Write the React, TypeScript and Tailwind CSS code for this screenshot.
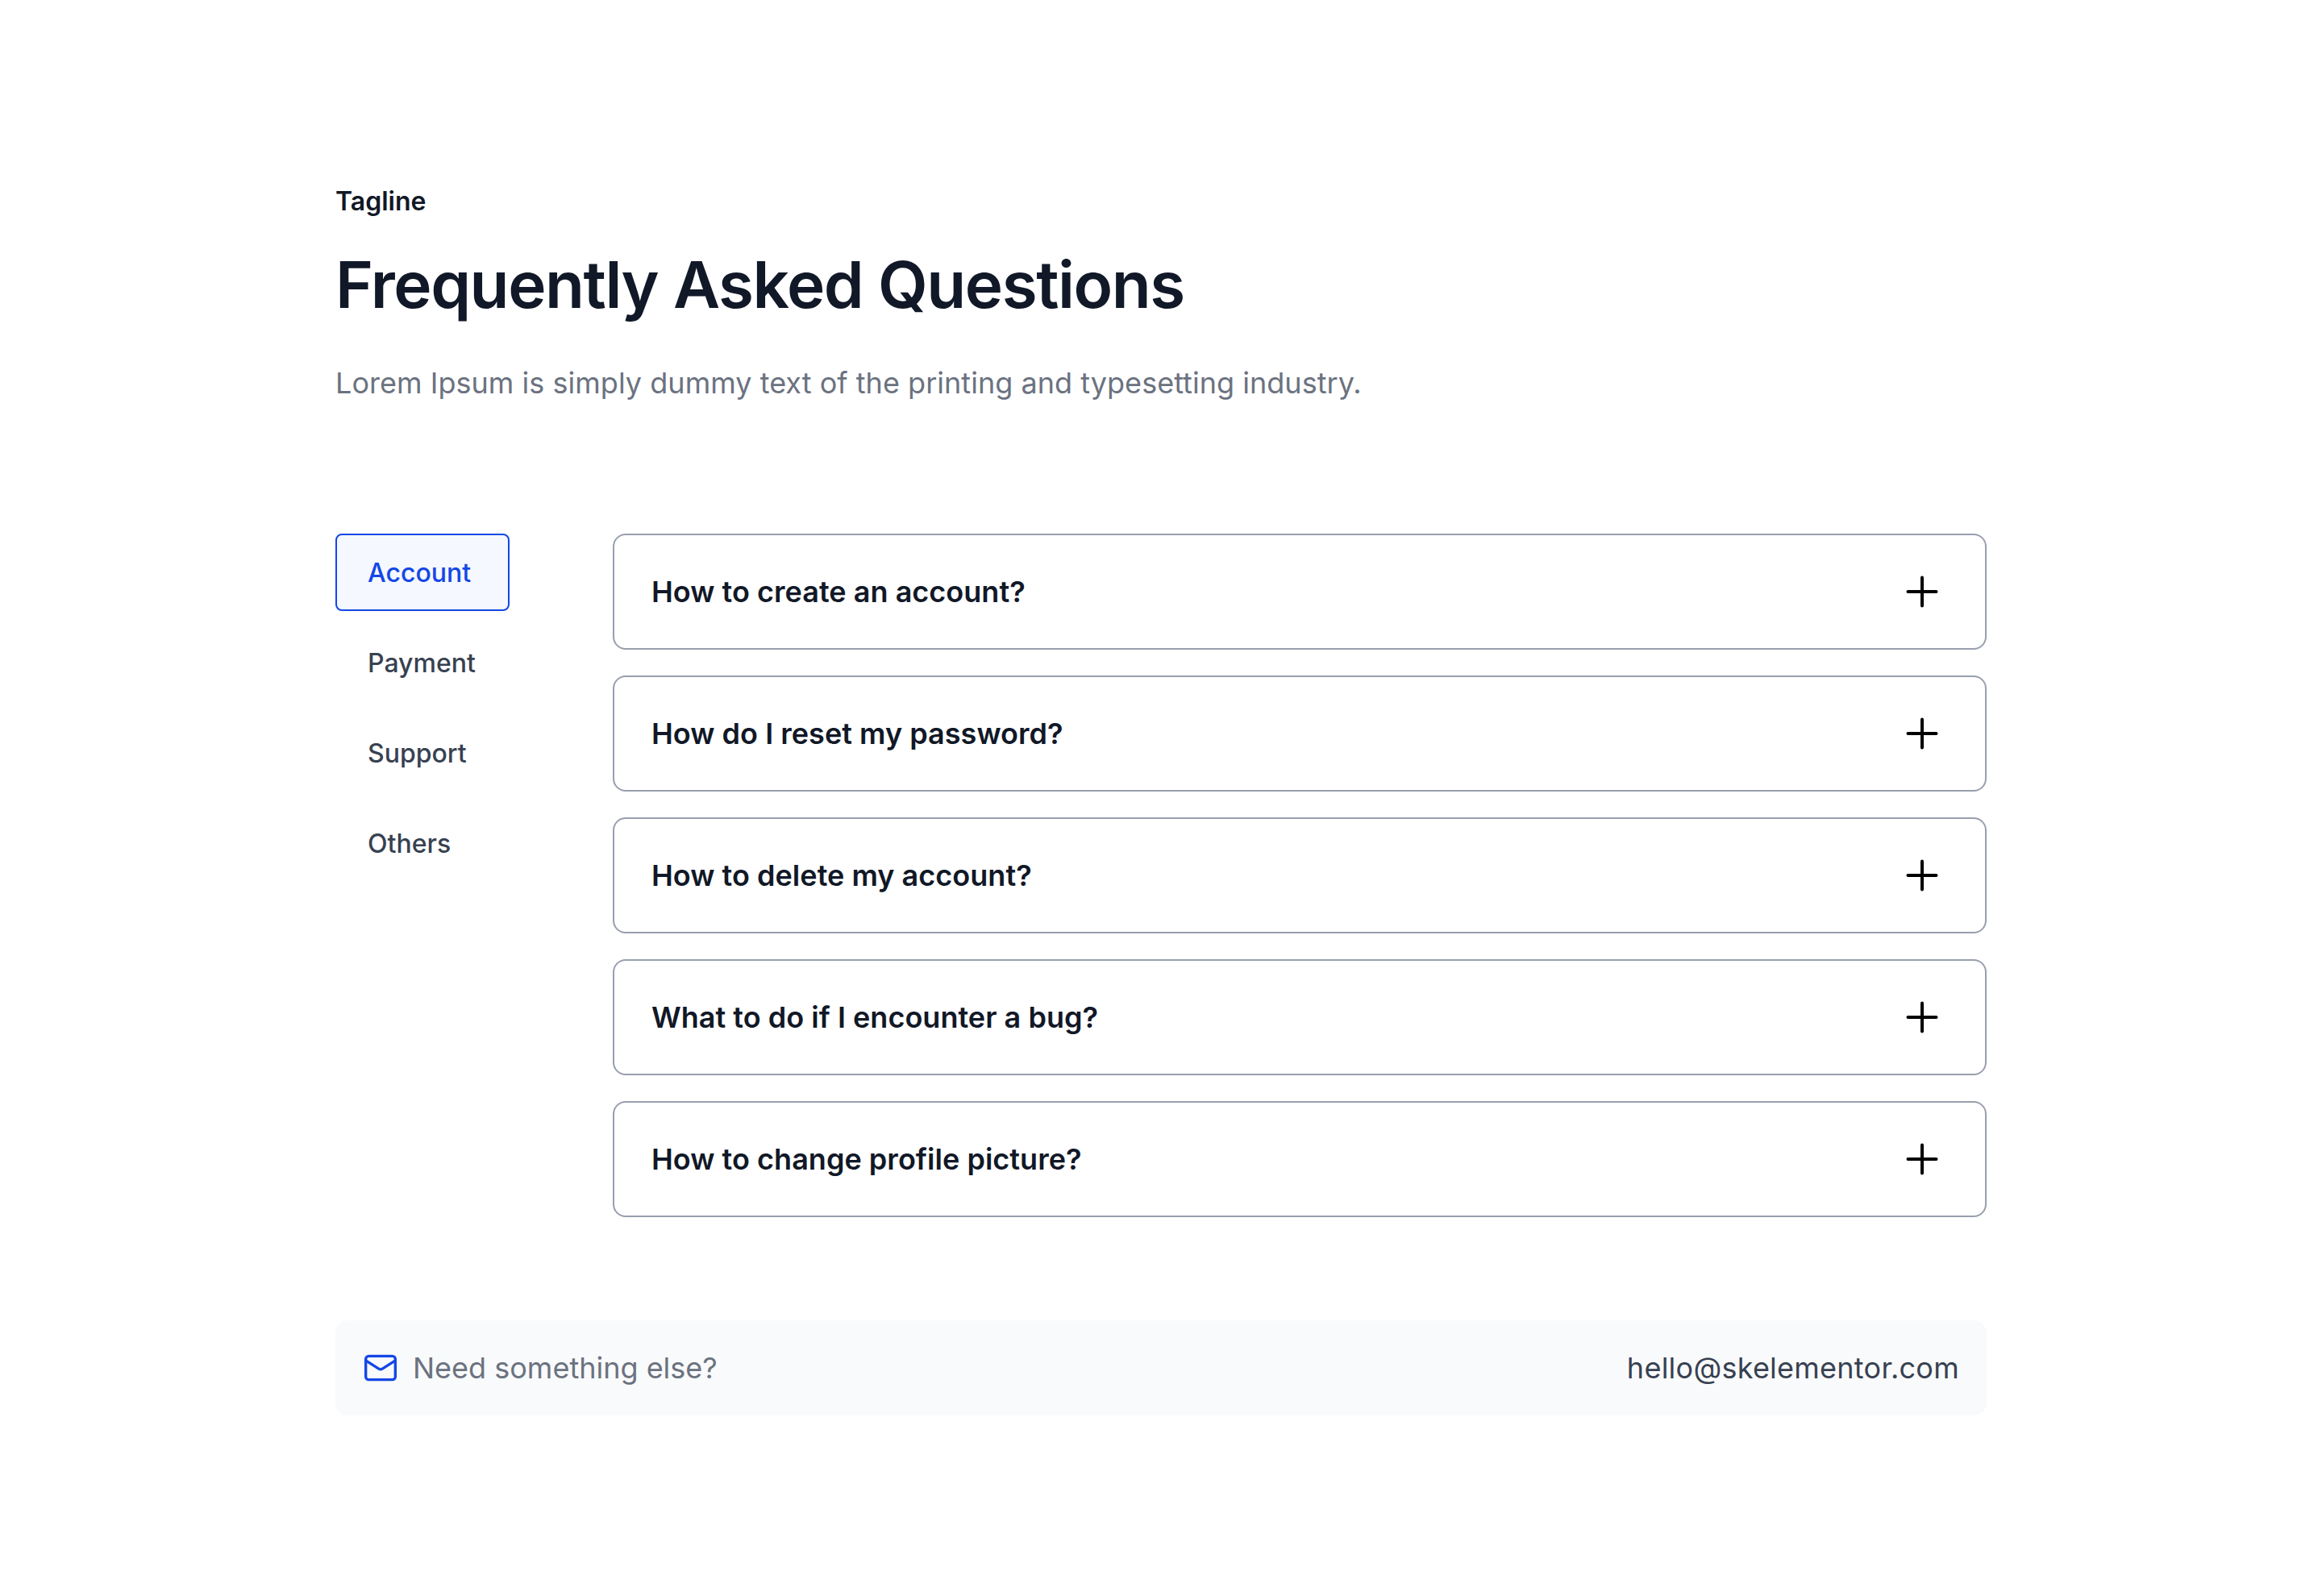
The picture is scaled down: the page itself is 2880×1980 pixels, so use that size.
import { Mail, Plus } from 'lucide-react';

const TABS = ['Account', 'Payment', 'Support', 'Others'];

const QUESTIONS = [
  'How to create an account?',
  'How do I reset my password?',
  'How to delete my account?',
  'What to do if I encounter a bug?',
  'How to change profile picture?',
];

export default function App() {
  return (
    <div className="min-h-[1980px] bg-white px-[416px] pt-[224px] font-['Inter',sans-serif]">
      {/* Header */}
      <p className="pt-[2px] text-[32px] leading-[48px] font-semibold text-[#111827]">Tagline</p>
      <h1 className="mt-[31px] text-[80px] leading-[96px] font-semibold tracking-[-1.45px] text-[#111827]">
        Frequently Asked Questions
      </h1>
      <p className="mt-[47px] text-[36px] leading-[54px] tracking-[0.03px] text-[#6b7280]">
        Lorem Ipsum is simply dummy text of the printing and typesetting industry.
      </p>

      {/* Tabs and questions */}
      <div className="mt-[160px] flex gap-[128px]">
        <nav className="flex w-[216px] shrink-0 flex-col gap-4">
          {TABS.map((t, i) => (
            <button
              key={t}
              className={`h-24 rounded-lg border-2 px-[38px] pt-[2px] text-left text-[32px] font-medium ${
                i === 0 ? 'border-[#1447e6] bg-[#f5f8ff] text-[#1447e6]' : 'border-transparent text-[#374151]'
              }`}
            >
              {t}
            </button>
          ))}
        </nav>

        <div className="flex flex-1 flex-col gap-8">
          {QUESTIONS.map(q => (
            <div
              key={q}
              className="flex h-36 items-center justify-between rounded-2xl border-2 border-[#989fae] pr-[48px] pl-[46px]"
            >
              <span className="text-[36px] font-semibold tracking-[0.03px] text-[#111827]">{q}</span>
              <Plus size={60} strokeWidth={1.6} className="text-black" />
            </div>
          ))}
        </div>
      </div>

      {/* Contact bar */}
      <div className="mt-[128px] flex items-center justify-between rounded-2xl bg-[#f9fafb] py-8 pr-[34px] pl-[34px]">
        <div className="flex items-center gap-[18px]">
          <Mail size={44} strokeWidth={1.85} className="text-[#1447e6]" />
          <span className="text-[36px] leading-[54px] text-[#6b7280]">Need something else?</span>
        </div>
        <span className="text-[36px] leading-[54px] tracking-[0.25px] text-[#374151]">hello@skelementor.com</span>
      </div>
    </div>
  );
}
